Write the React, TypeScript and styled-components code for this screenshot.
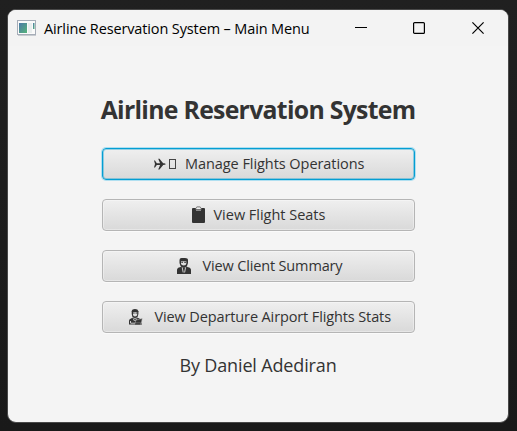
import React from "react";
import styled, { createGlobalStyle } from "styled-components";

const GlobalStyle = createGlobalStyle`
  * { box-sizing: border-box; }
  html, body, #root { margin: 0; height: 100%; }
  body { background: #1e1e1e; overflow: hidden; }
`;

const Desktop = styled.div`
  width: 517px;
  height: 431px;
  padding: 9px 8px 8px 7px;
  background: linear-gradient(#202020, #191919);
  font-family: "Open Sans", "Noto Sans", sans-serif;
`;

const Window = styled.main`
  height: 414px;
  border: 1px solid #484848;
  border-radius: 9px;
  background: #f4f4f4;
  overflow: hidden;
  display: flex;
  flex-direction: column;
`;

const TitleBar = styled.header`
  height: 36px;
  flex: none;
  display: flex;
  align-items: center;
  background: #f3f3f3;
  padding: 0 1px 0 9px;
`;

const WindowTitle = styled.span`
  margin: 2px 0 0 8px;
  width: 266px;
  white-space: nowrap;
  font-size: 14.5px;
  letter-spacing: -0.13px;
  line-height: 20px;
  color: #000;
`;

const Controls = styled.div`
  display: flex;
  margin-left: auto;
`;

const Control = styled.button`
  width: 58.5px;
  height: 36px;
  padding: 0;
  border: 0;
  background: none;
  display: flex;
  align-items: center;
  justify-content: center;
`;

const Content = styled.section`
  flex: 1;
  display: flex;
  flex-direction: column;
  align-items: center;
  padding: 44px 0 0;
  color: #333;
`;

const Heading = styled.h1`
  margin: 0;
  height: 38px;
  line-height: 38px;
  font-size: 24.8px;
  font-weight: 700;
  white-space: nowrap;
  letter-spacing: -0.71px;
`;

const Menu = styled.nav`
  margin-top: 20px;
  display: flex;
  flex-direction: column;
  gap: 19px;
`;

const MenuButton = styled.button<{ $focused?: boolean }>`
  width: 313px;
  height: 32px;
  padding: 0;
  display: flex;
  align-items: center;
  justify-content: center;
  gap: 8px;
  border: 1px solid ${(p) => (p.$focused ? "#039ed3" : "#b5b5b5")};
  border-radius: 4px;
  background: linear-gradient(#efefef, #d9d9d9);
  box-shadow: ${(p) =>
    p.$focused
      ? "0 0 0 1px #b0dff0, inset 0 0 0 1px rgba(3,158,211,.38)"
      : "inset 0 0 0 1px rgba(255,255,255,.35), 0 1px 0 #fafafa"};
  font-family: inherit;
  color: #333;
`;

const Label = styled.span<{ $width: number; $spacing: number }>`
  width: ${(p) => p.$width}px;
  white-space: nowrap;
  text-align: left;
  font-size: 14.5px;
  line-height: 20px;
  letter-spacing: ${(p) => p.$spacing}px;
`;

const Glyph = styled.svg`
  flex: none;
  display: block;
`;

const Byline = styled.p`
  margin: 19px 0 0;
  line-height: 26px;
  font-size: 18px;
  letter-spacing: -0.15px;
  white-space: nowrap;
`;

const AppIcon = () => (
  <Glyph width="19" height="16" viewBox="0 0 19 16">
    <defs>
      <linearGradient id="screen" x1="0" y1="0" x2="1" y2="1">
        <stop offset="0" stopColor="#4d79a8" />
        <stop offset="1" stopColor="#55b47a" />
      </linearGradient>
    </defs>
    <rect x=".5" y=".5" width="18" height="14" fill="#fafafa" stroke="#a6adb8" />
    <path d="M1 15.5h18" stroke="#c7cbd0" />
    <rect x="2" y="3" width="8" height="10" fill="url(#screen)" />
    <rect x="11" y="3" width="4" height="10" fill="#e9eeee" />
    <rect x="16" y="3" width="1.5" height="6" fill="url(#screen)" />
  </Glyph>
);

const Plane = () => (
  <Glyph width="24" height="18" viewBox="0 0 24 18">
    <path
      d="M1 5.6h1l1.8 2.6h3.3L5.2 3.8h1.3l3.7 4.4c1.6 0 2.4.2 2.4.9s-.8.9-2.4.9l-3.7 4.4H5.2L7.1 10H3.8L2 12.6H1l1-3.5z"
      fill="#333"
    />
    <rect x="16.5" y="4.5" width="6" height="9" fill="none" stroke="#444" />
  </Glyph>
);

const Clipboard = () => (
  <Glyph width="15" height="18" viewBox="0 0 15 18">
    <path d="M2 2h3v2.5h5V2h3q1 0 1 1v13q0 1-1 1H2q-1 0-1-1V3q0-1 1-1z" fill="#333" />
    <path d="M4.8 3.5V2L6 .9h3L10.2 2v1.5z" fill="#eee" stroke="#555" strokeWidth=".8" />
  </Glyph>
);

const Client = () => (
  <Glyph width="21" height="18" viewBox="0 0 21 18">
    <path d="M5.5 6V3q0-2 2-2h3.5q3 0 3 2v3l-1 3q-1.3 1.7-3.2 1.7T6.5 9z" fill="#333" />
    <path d="M7 4.2h5.3v2.4q0 1.9-2.6 1.9T7 6.6z" fill="#ddd" />
    <path d="M7.3 5.3H9m1.2 0h1.8" stroke="#333" />
    <path d="M3 17v-4q0-2.3 3-2.8l2-1 2 1.5 2-1.5 2 1q3 .5 3 2.8v4z" fill="#333" />
    <path d="M8.2 10.3 9.2 15.5m2.4-5.2-1 5.2" stroke="#ddd" strokeWidth=".9" />
  </Glyph>
);

const OfficeWorker = () => (
  <Glyph width="21" height="18" viewBox="0 0 21 18">
    <path d="M5.7 6V3.2Q6 1 9 1t3.4 2.2V6l-.7 2.5Q10.5 10 9 10T6.3 8.5z" fill="#333" />
    <path d="M7 4h4.2v2.7Q11 8.5 9 8.5T7 6.7z" fill="#ddd" />
    <path d="M7 5h1.7m.8 0h1.8" stroke="#333" />
    <path d="M3 16.5v-3.7q0-2 2.5-2.5L7 9.5l2 1.5 2-1.5 2 .8q1.4.6 1.4 2.2v4z" fill="#333" />
    <path d="M7.3 10.5 8.5 13m2.2-2.5L9.5 13M4.5 15.2h5M4.5 13v2" stroke="#ddd" strokeWidth=".9" />
    <path d="m10 12 6.2-1.5-.8 4.5H9z" fill="#333" stroke="#bbb" strokeWidth=".5" />
    <path d="M9 16h7" stroke="#333" />
  </Glyph>
);

const items = [
  { text: "Manage Flights Operations", width: 178, spacing: -0.06, Icon: Plane },
  { text: "View Flight Seats", width: 112, spacing: -0.02, Icon: Clipboard },
  { text: "View Client Summary", width: 140, spacing: -0.15, Icon: Client },
  { text: "View Departure Airport Flights Stats", width: 236, spacing: -0.12, Icon: OfficeWorker },
];

export default function App() {
  return (
    <Desktop>
      <GlobalStyle />
      <Window>
        <TitleBar>
          <AppIcon />
          <WindowTitle>Airline Reservation System – Main Menu</WindowTitle>
          <Controls>
            <Control aria-label="Minimize">
              <Glyph width="12" height="12"><path d="M0 5.5h12" stroke="#000" /></Glyph>
            </Control>
            <Control aria-label="Maximize">
              <Glyph width="12" height="12">
                <rect x=".6" y=".6" width="10.8" height="10.8" rx="1" fill="none" stroke="#000" strokeWidth="1.2" />
              </Glyph>
            </Control>
            <Control aria-label="Close">
              <Glyph width="12" height="12"><path d="m.4.4 11.2 11.2m0-11.2L.4 11.6" stroke="#000" strokeWidth="1.2" /></Glyph>
            </Control>
          </Controls>
        </TitleBar>
        <Content>
          <Heading>Airline Reservation System</Heading>
          <Menu>
            {items.map(({ text, width, spacing, Icon }, i) => (
              <MenuButton key={text} $focused={i === 0}>
                <Icon />
                <Label $width={width} $spacing={spacing}>{text}</Label>
              </MenuButton>
            ))}
          </Menu>
          <Byline>By Daniel Adediran</Byline>
        </Content>
      </Window>
    </Desktop>
  );
}
